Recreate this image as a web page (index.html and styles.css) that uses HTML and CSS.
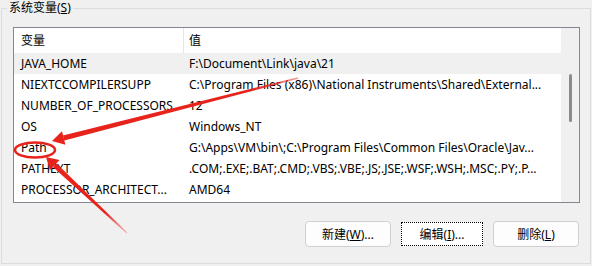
FILE: index.html
```html
<!DOCTYPE html>
<html lang="zh-CN">
<head>
<meta charset="UTF-8">
<title>系统变量</title>
<link rel="stylesheet" href="styles.css">
</head>
<body>

<fieldset class="group">
    <legend>系统变量(<u>S</u>)</legend>

    <div class="listbox">
        <div class="list">
            <div class="row head">
                <div class="cell name">变量</div>
                <div class="cell value">值</div>
            </div>
            <div class="row hover">
                <div class="cell name">JAVA_HOME</div>
                <div class="cell value">F:\Document\Link\java\21</div>
            </div>
            <div class="row">
                <div class="cell name">NIEXTCCOMPILERSUPP</div>
                <div class="cell value">C:\Program Files (x86)\National Instruments\Shared\External...</div>
            </div>
            <div class="row">
                <div class="cell name">NUMBER_OF_PROCESSORS</div>
                <div class="cell value">12</div>
            </div>
            <div class="row">
                <div class="cell name">OS</div>
                <div class="cell value">Windows_NT</div>
            </div>
            <div class="row">
                <div class="cell name">Path</div>
                <div class="cell value">G:\Apps\VM\bin\;C:\Program Files\Common Files\Oracle\Jav...</div>
            </div>
            <div class="row">
                <div class="cell name">PATHEXT</div>
                <div class="cell value">.COM;.EXE;.BAT;.CMD;.VBS;.VBE;.JS;.JSE;.WSF;.WSH;.MSC;.PY;.P...</div>
            </div>
            <div class="row">
                <div class="cell name">PROCESSOR_ARCHITECT...</div>
                <div class="cell value">AMD64</div>
            </div>
        </div>
        <div class="scrollbar">
            <div class="thumb"></div>
        </div>
    </div>

    <div class="buttons">
        <button class="btn">新建(<u>W</u>)...</button>
        <button class="btn focus">编辑(<u>I</u>)...</button>
        <button class="btn">删除(<u>L</u>)</button>
    </div>
</fieldset>

<!-- red annotation drawn on top of the screenshot -->
<svg class="marks" width="592" height="266" viewBox="0 0 592 266">
    <defs>
        <linearGradient id="fade1" gradientUnits="userSpaceOnUse" x1="298" y1="78" x2="64" y2="138">
            <stop offset="0" stop-color="#e8231c" stop-opacity="0.45"/>
            <stop offset="0.2" stop-color="#e8231c" stop-opacity="1"/>
        </linearGradient>
        <linearGradient id="fade2" gradientUnits="userSpaceOnUse" x1="127" y1="233" x2="55" y2="165">
            <stop offset="0" stop-color="#e8231c" stop-opacity="0.25"/>
            <stop offset="0.3" stop-color="#e8231c" stop-opacity="1"/>
        </linearGradient>
    </defs>
    <polygon points="64.3,140.6 62.9,135.4 297.8,77.2 298.2,78.8" fill="url(#fade1)"/>
    <polygon points="52,141 62,131.2 65.4,144.8" fill="#e8231c"/>
    <polygon points="56.6,163.4 52.9,167.1 126.6,233.4 127.4,232.6" fill="url(#fade2)"/>
    <polygon points="46,157 59.6,160.1 49.9,170.3" fill="#e8231c"/>
    <ellipse cx="35" cy="150" rx="20" ry="7.5" fill="none" stroke="#e8231c" stroke-width="2.5"/>
</svg>

</body>
</html>
```

FILE: styles.css
```css
body {
    margin: 0;
    width: 592px;
    height: 266px;
    overflow: hidden;
    position: relative;
    background: #f0f0f0;
    font-family: "Noto Sans", "Noto Sans CJK SC", sans-serif;
    font-size: 12px;
    color: #000;
}

.group {
    box-sizing: border-box;
    width: 590px;
    height: 264px;
    margin: 0 1px 2px 1px;
    padding: 0;
    border: 1px solid #dcdcdc;
}

.group legend {
    margin-left: 5px;
    padding: 0 2px;
    line-height: 16px;
}

.listbox {
    display: flex;
    width: 567px;
    height: 176px;
    margin: 11px 0 0 11px;
    box-sizing: border-box;
    border: 1px solid #828790;
    background: #fff;
}

.list {
    flex: 1;
    overflow: hidden;
}

.row {
    display: flex;
    height: 21px;
    line-height: 21px;
    white-space: nowrap;
}

.row.head {
    height: 25px;
    line-height: 25px;
}

.row.hover {
    background: #f0f0f0;
}

.cell.name {
    width: 162px;
    padding-left: 7px;
    overflow: hidden;
}

.cell.value {
    flex: 1;
    padding-left: 5px;
    overflow: hidden;
}

.row.head .cell.name {
    border-right: 1px solid #e5e5e5;
}

.row:not(.head) .cell.value {
    margin-left: 1px;
}

.scrollbar {
    width: 18px;
    background: #f0f0f0;
    position: relative;
}

.thumb {
    width: 3px;
    height: 48px;
    margin: 46px 0 0 8px;
    border-radius: 2px;
    background: #8a8a8a;
}

.buttons {
    display: flex;
    justify-content: flex-end;
    gap: 8px;
    margin: 18px 11px 0 0;
}

.btn {
    box-sizing: border-box;
    width: 86px;
    height: 26px;
    padding: 0;
    border: 1px solid #d0d0d0;
    border-radius: 4px;
    background: #fdfdfd;
    font-family: "Noto Sans", "Noto Sans CJK SC", sans-serif;
    font-size: 12px;
    color: #000;
}

.btn.focus {
    width: 82px;
    height: 24px;
    margin: 1px 2px;
    border: 1px dotted #000;
    border-radius: 0;
    background: #fff;
}

.marks {
    position: absolute;
    top: 0;
    left: 0;
    pointer-events: none;
}
```
